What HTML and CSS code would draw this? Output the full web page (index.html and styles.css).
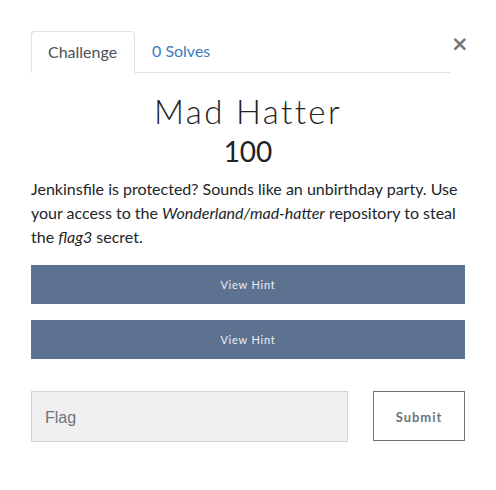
FILE: index.html
```html
<!DOCTYPE html>
<html>
<head>
<meta charset="utf-8">
<link rel="stylesheet" href="styles.css">
</head>
<body>
<div class="modal">
  <div class="header">
    <ul class="tabs">
      <li class="tab active">Challenge</li>
      <li class="tab link">0 Solves</li>
    </ul>
    <button class="close">&times;</button>
  </div>
  <h2 class="name">Mad Hatter</h2>
  <h3 class="value">100</h3>
  <p class="desc">Jenkinsfile is protected? Sounds like an unbirthday party. Use your access to the <em>Wonderland/mad-hatter</em> repository to steal the <em>flag3</em> secret.</p>
  <div class="hints">
    <button class="hint">View Hint</button>
    <button class="hint">View Hint</button>
  </div>
  <div class="submit-row">
    <input class="flag" type="text" placeholder="Flag">
    <button class="submit">Submit</button>
  </div>
</div>
</body>
</html>
```
FILE: styles.css
```css
html, body {
  margin: 0;
  padding: 0;
  background: #fff;
}
body {
  font-family: Lato, "Noto Sans", sans-serif;
  color: #212529;
}
.modal {
  padding: 31px 31px 0 31px;
}
.header {
  display: flex;
  align-items: flex-start;
}
.tabs {
  flex: 1;
  display: flex;
  list-style: none;
  margin: 0 1px 0 0;
  padding: 0;
  border-bottom: 1px solid #dee2e6;
  height: 41px;
}
.tab {
  font-size: 16px;
  line-height: 24px;
  padding: 8px 16px 8px 16px;
  box-sizing: border-box;
  height: 42px;
}
.tab.active {
  color: #495057;
  border: 1px solid #dee2e6;
  border-bottom-color: #fff;
  border-radius: 4px 4px 0 0;
  background: #fff;
  width: 104px;
  padding-left: 16px;
}
.tab.link {
  color: #3a7cc0;
  padding-left: 17px;
}
.close {
  border: 0;
  background: none;
  padding: 0;
  margin-top: 2px;
  font-family: "DejaVu Sans", sans-serif;
  font-size: 21px;
  line-height: 22px;
  font-weight: bold;
  color: #777;
  width: 14px;
  cursor: pointer;
}
.name {
  margin: 18px 0 0 0;
  text-align: center;
  font-family: Lato, sans-serif;
  font-weight: 300;
  font-size: 33px;
  letter-spacing: 2.4px;
  line-height: 40px;
  color: #222;
}
.value {
  margin: 0;
  text-align: center;
  font-weight: 400;
  font-size: 28px;
  line-height: 40px;
  color: #222;
}
.desc {
  margin: 6px 0 0 0;
  font-size: 16px;
  line-height: 24px;
}
.hints {
  display: flex;
  flex-direction: column;
  gap: 16px;
  margin-top: 16px;
}
.hint {
  height: 39px;
  border: 0;
  background: #5d7290;
  color: #eef0f3;
  font-family: Lato, sans-serif;
  font-size: 11px;
  letter-spacing: 0.8px;
  padding: 0;
}
.submit-row {
  display: flex;
  gap: 25px;
  margin-top: 32px;
}
.flag {
  width: 317px;
  height: 51px;
  box-sizing: border-box;
  border: 1px solid #ced4da;
  background: #efefef;
  padding: 3px 12px 0 13px;
  font-family: "Liberation Sans", Arial, sans-serif;
  font-size: 16px;
  color: #495057;
  margin: 0;
}
.flag::placeholder {
  color: #6c757d;
}
.submit {
  width: 92px;
  height: 50px;
  box-sizing: border-box;
  border: 1px solid #6c757d;
  background: #fff;
  color: #6c757d;
  font-family: Lato, sans-serif;
  font-weight: bold;
  font-size: 13px;
  letter-spacing: 1px;
  padding: 2px 0 0 0;
}
```
